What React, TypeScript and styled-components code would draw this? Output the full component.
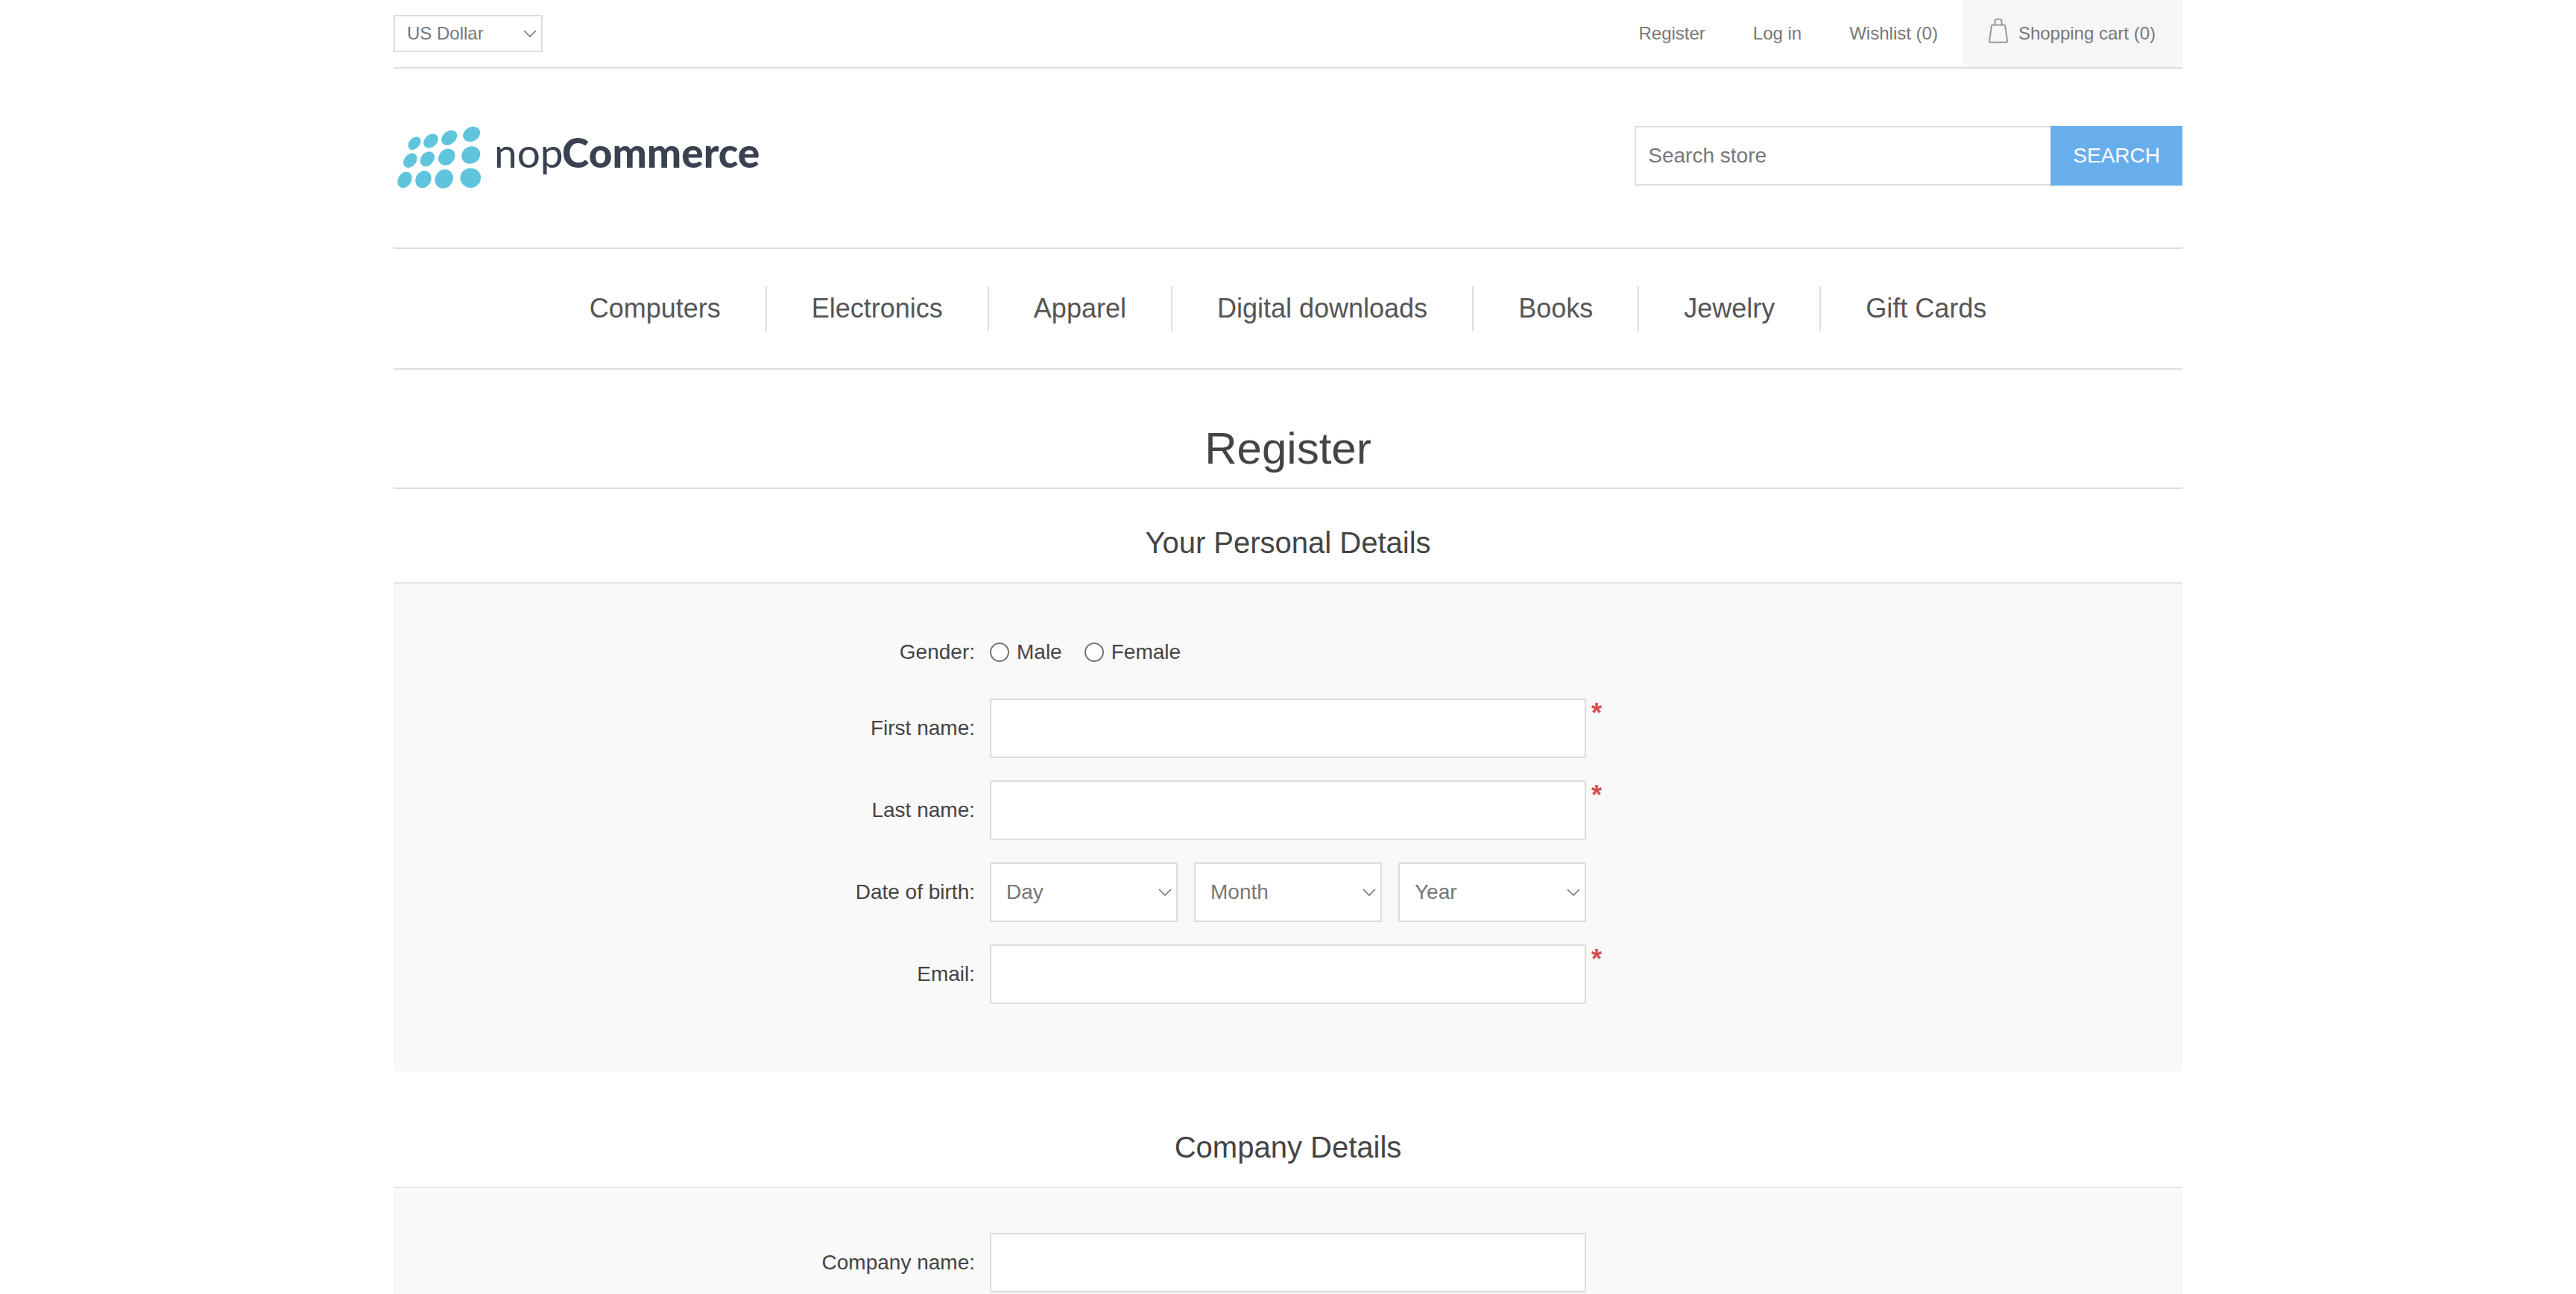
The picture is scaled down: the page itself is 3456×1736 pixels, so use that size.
import React from "react";
import styled, { createGlobalStyle } from "styled-components";

const line = "#ddd";

const GlobalStyle = createGlobalStyle`
  *, *::before, *::after { box-sizing: border-box; }
  html { scrollbar-width: none; }
  body {
    margin: 0;
    background: #fff;
    color: #444;
    font: 28px/1.2 Arial, "Liberation Sans", Helvetica, sans-serif;
  }
  input, select, button { font: inherit; margin: 0; border-radius: 0; }
  a { color: inherit; text-decoration: none; }
  ul { list-style: none; margin: 0; padding: 0; }
`;

const Page = styled.div`
  width: 100%;
  max-width: 2400px;
  margin: 0 auto;
`;

const TopBar = styled.div`
  display: flex;
  align-items: center;
  justify-content: space-between;
  border-bottom: 2px solid ${line};
  color: #777;
  font-size: 24px;
`;

const TopLinks = styled.ul`
  display: flex;
  line-height: 90px;
`;

const TopLink = styled.a`
  display: block;
  padding: 0 32px;
`;

const CartLink = styled(TopLink)`
  display: flex;
  gap: 14px;
  padding: 0 36px;
  background: #f6f6f6;
`;

const BagIcon = styled.svg`
  width: 26px;
  height: 34px;
  margin-top: 24px;
`;

const SelectBox = styled.div<{ $compact?: boolean }>`
  position: relative;
  flex: ${(p) => (p.$compact ? "0 0 200px" : "1 1 0")};
  height: ${(p) => (p.$compact ? "50px" : "80px")};
  font-size: ${(p) => (p.$compact ? "24px" : "28px")};
  line-height: 32px;
`;

const Select = styled.select<{ $compact?: boolean }>`
  display: block;
  width: 100%;
  height: 100%;
  padding: 0 32px 0 ${(p) => (p.$compact ? "16px" : "20px")};
  border: 2px solid ${line};
  background: #fff;
  color: #777;
  appearance: none;
`;

const Chevron = styled.svg`
  position: absolute;
  right: 8px;
  top: 50%;
  width: 18px;
  height: 12px;
  margin-top: -6px;
  pointer-events: none;
`;

const Header = styled.header`
  display: flex;
  align-items: center;
  justify-content: space-between;
  height: 240px;
`;

const Logo = styled.svg`
  display: block;
  width: 500px;
  height: 100px;
`;

const SearchForm = styled.form`
  display: flex;
  height: 80px;
  margin-bottom: 6px;
`;

const SearchInput = styled.input`
  width: 558px;
  padding: 0 16px;
  border: 2px solid ${line};
  border-right: 0;
  color: #777;
  &::placeholder { color: #777; opacity: 1; }
`;

const SearchButton = styled.button`
  padding: 0 30px;
  border: 0;
  background: #69aeec;
  color: #fff;
  text-transform: uppercase;
`;

const Menu = styled.ul`
  display: flex;
  justify-content: center;
  padding: 50px 0;
  border-top: 2px solid ${line};
  border-bottom: 2px solid ${line};
  color: #555;
  font-size: 36px;
  line-height: 60px;
`;

const MenuItem = styled.li`
  padding: 0 60px;
  & + & { border-left: 2px solid ${line}; }
`;

const PageTitle = styled.h1`
  margin: 0;
  padding: 66px 0 12px;
  border-bottom: 2px solid ${line};
  font-size: 60px;
  font-weight: 400;
  line-height: 80px;
  text-align: center;
`;

const Section = styled.section`
  margin-bottom: 30px;
`;

const SectionTitle = styled.h2`
  margin: 0;
  padding: 49px 0 30px;
  font-size: 40px;
  font-weight: 400;
  line-height: 46px;
  text-align: center;
`;

const Panel = styled.div`
  display: flex;
  flex-direction: column;
  gap: 30px;
  padding: 60px 0 90px;
  border-top: 2px solid #e4e4e4;
  background: #f9f9f9;
`;

const Row = styled.div<{ $short?: boolean }>`
  display: grid;
  grid-template-columns: 1fr 800px 1fr;
  height: ${(p) => (p.$short ? "64px" : "80px")};
  line-height: ${(p) => (p.$short ? "64px" : "80px")};
`;

const Label = styled.label`
  padding-right: 20px;
  text-align: right;
`;

const TextInput = styled.input`
  width: 100%;
  height: 80px;
  padding: 0 16px;
  border: 2px solid ${line};
  background: #fff;
  color: #777;
`;

const Required = styled.span`
  padding-left: 7px;
  color: #d64e4f;
  font-size: 36px;
  font-weight: 700;
  line-height: 40px;
`;

const Choices = styled.div`
  display: flex;
  gap: 30px;
`;

const Choice = styled.label`
  display: flex;
  align-items: center;
  gap: 10px;
`;

const Radio = styled.input`
  width: 26px;
  height: 26px;
  border: 2px solid #767676;
  border-radius: 50% !important;
  background: #fff;
  appearance: none;
  &:checked { box-shadow: inset 0 0 0 4px #fff; background: #0075ff; }
`;

const DateFields = styled.div`
  display: flex;
  gap: 22px;
`;

// Each dot: centre x, centre y, long radius, short radius, tilt in degrees
const dots = [
  [28, 30.3, 10, 7, -47], [50, 27, 11, 8.2, -43], [74.7, 22.7, 11.7, 8.7, -40], [104.7, 18, 12, 9.6, -30],
  [22.3, 53.3, 10.8, 8, -50], [45.3, 51.3, 11, 8.6, -50], [71.3, 48.7, 12.2, 10.2, -45], [103.7, 46, 12.9, 11.4, -30],
  [15, 79.3, 11.5, 8.9, -58], [40, 78.7, 12, 10.2, -60], [67.7, 78, 13.2, 11.7, -55], [103.3, 76.7, 13.8, 13.3, 0],
];

function BrandLogo() {
  return (
    <Logo viewBox="0 0 500 100" role="img" aria-label="nopCommerce">
      {dots.map(([x, y, rx, ry, a]) => (
        <ellipse key={`${x}-${y}`} cx={x} cy={y} rx={rx} ry={ry} fill="#60c4dd" transform={`rotate(${a} ${x} ${y})`} />
      ))}
      <g fill="#3a4150" fontFamily="Lato, sans-serif" fontSize="55">
        <text x="135" y="63">nop</text>
        <text x="226" y="63" fontWeight="900">Commerce</text>
      </g>
    </Logo>
  );
}

type DropDownProps = { label: string; options: string[]; compact?: boolean };

function DropDown({ label, options, compact }: DropDownProps) {
  return (
    <SelectBox $compact={compact}>
      <Select aria-label={label} $compact={compact}>
        {options.map((o) => (
          <option key={o}>{o}</option>
        ))}
      </Select>
      <Chevron viewBox="0 0 18 12" aria-hidden="true">
        <path d="M1 2l8 8 8-8" fill="none" stroke="#777" strokeWidth="1.6" />
      </Chevron>
    </SelectBox>
  );
}

type FieldProps = { id: string; label: string; type?: string; required?: boolean };

function Field({ id, label, type = "text", required }: FieldProps) {
  return (
    <Row>
      <Label htmlFor={id}>{label}</Label>
      <TextInput id={id} type={type} required={required} />
      {required && <Required>*</Required>}
    </Row>
  );
}

const categories = ["Computers", "Electronics", "Apparel", "Digital downloads", "Books", "Jewelry", "Gift Cards"];

export default function App() {
  return (
    <>
      <GlobalStyle />
      <Page>
        <TopBar>
          <DropDown compact label="Currency" options={["US Dollar", "Euro"]} />
          <TopLinks>
            <li><TopLink href="#register">Register</TopLink></li>
            <li><TopLink href="#login">Log in</TopLink></li>
            <li><TopLink href="#wishlist">Wishlist (0)</TopLink></li>
            <li>
              <CartLink href="#cart">
                <BagIcon viewBox="0 0 26 34" aria-hidden="true">
                  <g fill="none" stroke="#999" strokeWidth="2" strokeLinejoin="round">
                    <path d="M5.500 9.500h15q1.500 0 1.700 1.500L25 31q0 1.700-1.500 1.700H2.500Q1 32.700 1 31L3.800 11q.2-1.500 1.700-1.500z" />
                    <path d="M8.500 9V4.500q0-2.800 2.800-2.800h3.400q2.800 0 2.800 2.800V9" />
                  </g>
                </BagIcon>
                Shopping cart (0)
              </CartLink>
            </li>
          </TopLinks>
        </TopBar>
        <Header>
          <a href="#home"><BrandLogo /></a>
          <SearchForm role="search">
            <SearchInput type="text" placeholder="Search store" aria-label="Search store" />
            <SearchButton type="button">Search</SearchButton>
          </SearchForm>
        </Header>
        <nav>
          <Menu>
            {categories.map((c) => (
              <MenuItem key={c}><a href="#category">{c}</a></MenuItem>
            ))}
          </Menu>
        </nav>
        <main>
          <PageTitle>Register</PageTitle>
          <Section>
            <SectionTitle>Your Personal Details</SectionTitle>
            <Panel>
              <Row $short role="radiogroup" aria-labelledby="gender">
                <Label as="span" id="gender">Gender:</Label>
                <Choices>
                  <Choice><Radio type="radio" name="gender" value="M" />Male</Choice>
                  <Choice><Radio type="radio" name="gender" value="F" />Female</Choice>
                </Choices>
              </Row>
              <Field id="first" label="First name:" required />
              <Field id="last" label="Last name:" required />
              <Row role="group" aria-labelledby="birth">
                <Label as="span" id="birth">Date of birth:</Label>
                <DateFields>
                  <DropDown label="Day" options={["Day", "1", "2", "3"]} />
                  <DropDown label="Month" options={["Month", "January", "February"]} />
                  <DropDown label="Year" options={["Year", "1990", "1991"]} />
                </DateFields>
              </Row>
              <Field id="email" label="Email:" type="email" required />
            </Panel>
          </Section>
          <Section>
            <SectionTitle>Company Details</SectionTitle>
            <Panel>
              <Field id="company" label="Company name:" />
            </Panel>
          </Section>
        </main>
      </Page>
    </>
  );
}
